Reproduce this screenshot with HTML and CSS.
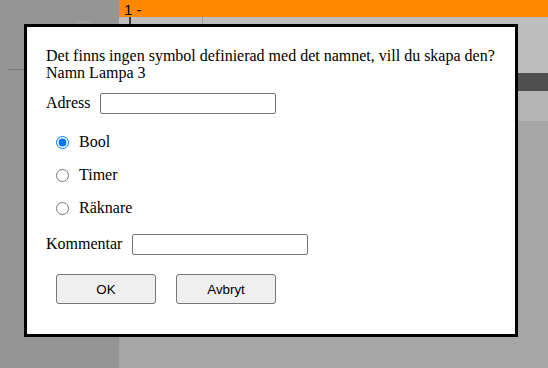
FILE: index.html
```html
<!DOCTYPE html>
<html>
<head>
<meta charset="utf-8">
<link rel="stylesheet" href="styles.css">
</head>
<body>
<div class="page">
  <div class="left">
    <div class="circle"></div>
    <div class="hline"></div>
  </div>
  <div class="right">
    <div class="topbar">1 -</div>
    <div class="ruler"><span class="tick tick-a"></span><span class="tick tick-b"></span></div>
    <div class="band band-light"></div>
    <div class="band band-dark"></div>
    <div class="band band-mid"></div>
    <div class="band band-rest"></div>
  </div>
</div>
<div class="dialog">
  <p class="msg">Det finns ingen symbol definierad med det namnet, vill du skapa den?<br>Namn Lampa 3</p>
  <div class="field"><label>Adress</label><input type="text" class="inp"></div>
  <div class="radios">
    <label class="radio"><input type="radio" name="t" checked><span>Bool</span></label>
    <label class="radio"><input type="radio" name="t"><span>Timer</span></label>
    <label class="radio"><input type="radio" name="t"><span>Räknare</span></label>
  </div>
  <div class="field"><label>Kommentar</label><input type="text" class="inp"></div>
  <div class="buttons"><button>OK</button><button>Avbryt</button></div>
</div>
</body>
</html>
```
FILE: styles.css
```css
html, body { margin: 0; padding: 0; }
body { width: 548px; height: 368px; overflow: hidden; font-family: "Liberation Serif", "Times New Roman", serif; font-size: 16px; position: relative; }
.page { display: flex; height: 368px; }
.left { width: 119px; background: #959595; position: relative; }
.circle { position: absolute; left: 72px; top: 21px; width: 24px; height: 24px; border: 1px solid #a8a8a8; border-radius: 50%; box-sizing: border-box; }
.hline { position: absolute; left: 8px; top: 69px; width: 20px; height: 1px; background: #7d7d7d; }
.right { flex: 1; display: flex; flex-direction: column; }
.topbar { height: 17px; background: #ff8800; font-family: "Liberation Sans", sans-serif; font-size: 15px; line-height: 19px; padding-left: 5px; color: #000; }
.ruler { height: 8px; background: #bebebe; position: relative; }
.tick { position: absolute; top: 0; height: 8px; }
.tick-a { left: 10px; width: 2px; background: #3c3c3c; }
.tick-b { left: 83px; width: 1px; background: #a0a0a0; }
.band-light { height: 48px; background: #bebebe; }
.band-dark { height: 18px; background: #4f4f4f; }
.band-mid { height: 30px; background: #b4b4b4; }
.band-rest { flex: 1; background: #a6a6a6; }
.dialog { position: absolute; left: 24px; top: 24px; width: 494px; height: 313px; box-sizing: border-box; border: 3px solid #000; background: #fff; padding: 20px 19px; }
.msg { margin: 0 0 10px; line-height: 17px; }
.field { display: flex; align-items: center; gap: 10px; height: 24px; }
.inp { width: 176px; height: 21px; box-sizing: border-box; border: 1px solid #767676; border-radius: 2px; padding: 1px 2px; margin: 0; }
.radios { display: flex; flex-direction: column; padding: 17px 0 14px 10px; gap: 13px; }
.radio { display: flex; align-items: center; gap: 10px; height: 20px; }
.radio input { margin: 0; width: 13px; height: 13px; accent-color: #0075ff; }
.buttons { display: flex; gap: 20px; padding: 18px 0 0 10px; }
button { width: 100px; height: 30px; font-family: "Liberation Sans", sans-serif; font-size: 13.33px; background: #efefef; border: 1px solid #767676; border-radius: 3px; color: #000; margin: 0; }
```
